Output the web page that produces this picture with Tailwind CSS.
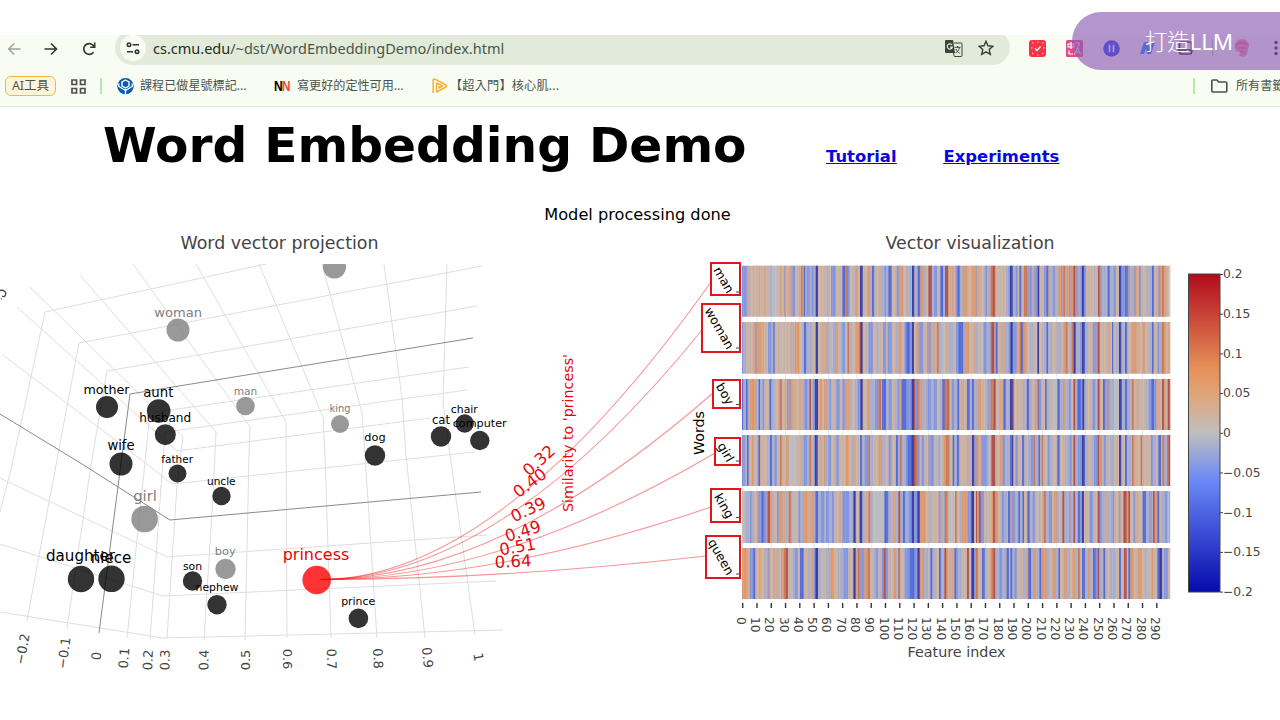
<!DOCTYPE html>
<html lang="zh-Hant">
<head>
<meta charset="utf-8">
<title>Word Embedding Demo</title>
<script src="https://cdn.jsdelivr.net/npm/@tailwindcss/browser@4"></script>
</head>
<body class="relative h-[720px] w-[1280px] overflow-hidden bg-white pt-[35px] font-['DejaVu_Sans',sans-serif] text-black">
<header class="h-[72px] overflow-hidden border-b border-[#e3eada] bg-[#f8fcf2] font-['Noto_Sans','Noto_Sans_CJK_TC',sans-serif]">
  <div class="flex h-[30px] items-start">
    <div class="flex h-[27px] w-[115px] shrink-0 items-center gap-[21px] pl-[7px]">
      <svg class="size-4" viewBox="0 0 16 16" fill="none" stroke="#9ca39a" stroke-width="1.5"><path d="M13.5 8H2M7.2 2.5 1.7 8l5.5 5.5"/></svg>
      <svg class="size-4" viewBox="0 0 16 16" fill="none" stroke="#2f372e" stroke-width="1.6"><path d="M.5 8h11.8M7 2.5 12.5 8 7 13.5"/></svg>
      <svg class="size-4" viewBox="0 0 16 16" fill="none" stroke="#2f372e" stroke-width="1.6"><path d="M12.5 11.2A5.4 5.4 0 1 1 12 4.2L13.6 6M13.7 1.6v4.6H9.2"/></svg>
    </div>
    <div class="mt-[-5px] flex h-[35px] w-[895px] shrink-0 items-start rounded-full bg-[#e2ebda] pl-[5px] pt-[5px]">
      <div class="flex h-[26px] w-[26px] items-center justify-center rounded-full bg-[#f8fcf2]">
        <svg class="size-[14px]" viewBox="0 0 14 14" fill="none" stroke="#2f372e" stroke-width="1.6"><circle cx="3" cy="3.7" r="1.7"/><path d="M6.5 3.7H13M1 10.7h6"/><circle cx="11" cy="10.7" r="1.7"/></svg>
      </div>
      <div class="ml-[7px] w-[759px] whitespace-nowrap text-[14.5px] leading-[26px] text-[#4c5549]"><span class="text-[#232b22]">cs.cmu.edu</span>/~dst/WordEmbeddingDemo/index.html</div>
      <svg class="ml-[33px] mt-[5px] h-[18px] w-[18px]" viewBox="0 0 18 18"><path d="M1 0h7l2 13H1a1 1 0 0 1-1-1V1a1 1 0 0 1 1-1z" fill="#3c433b"/><path d="M8.7 3H16a1 1 0 0 1 1 1v11.500a1 1 0 0 1-1 1H9.500L8.300 13" fill="none" stroke="#3c433b"/><path d="M7 5A2.600 2.600 0 1 0 7.300 7.200H5" fill="none" stroke="#e2ebda" stroke-width="1.200"/><path d="M9.600 7.300H15.500M12.500 6v1.300M14.500 7.500c-.5 2.500-2 4.500-4 5.500M11 9c.8 2 2 3.300 3.700 4.300" fill="none" stroke="#3c433b"/></svg>
      <svg class="ml-[15px] mt-[5px] size-4" viewBox="0 0 16 16" fill="none" stroke="#333b32" stroke-width="1.400"><path d="m8 1.300 2 4.500 4.900.5-3.700 3.300 1.100 4.800L8 11.900l-4.300 2.500 1.100-4.800L1.100 6.300 6 5.800z"/></svg>
    </div>
    <div class="flex w-[270px] shrink-0 items-center pl-[19px] pt-[3px]">
      <svg class="size-[17px]" viewBox="0 0 17 17"><rect width="17" height="17" rx="3" fill="#f4344d"/><path d="M3 3h1.500M8 2h1.500M13 3h1.500M2 8h1.500M14 8h1.500M3 13.500h1.500M8 15h1.500M13 13.500h1.500" stroke="#ffb04d" stroke-width="1.500"/><path d="m6 8.500 2 2 3.500-4" fill="none" stroke="#fff" stroke-width="1.300"/></svg>
      <svg class="ml-[20px] h-[17px] w-[17px]" viewBox="0 0 17 17"><rect width="17" height="17" rx="1.500" fill="#e54b86"/><path d="M2 4h6v3H2zM5 2v7M3 10.500v3.500h4M9.500 3h3.500v3" fill="none" stroke="#fff" stroke-width="1.200"/><path d="m8.500 14.500 3-7 3 7M9.800 12h3.500" fill="none" stroke="#e8cce8" stroke-width="1.300"/></svg>
      <svg class="ml-[20px] size-[17px]" viewBox="0 0 17 17"><circle cx="8.500" cy="8.500" r="8.300" fill="#0a35ff"/><path d="M6.500 4.800v7.400M10.500 4.800v7.400" stroke="#fff" stroke-width="1.700"/></svg>
      <svg class="ml-[20px] h-[17px] w-[17px]" viewBox="0 0 17 17"><path d="M4 2h4l1 5 2-5h4l-4 12H7L6 9l-2 5H0z" fill="#0082ff"/></svg>
      <svg class="ml-[20px] h-[17px] w-[17px]" viewBox="0 0 17 17" fill="none" stroke="#111b18" stroke-width="1.700"><rect x="2.500" y="2" width="12" height="12" rx="1.500"/><path d="M.5 10h16"/></svg>
      <div class="ml-[18px] h-4 w-px bg-[#8ac987]"></div>
      <svg class="ml-[19px] size-[20px]" viewBox="0 0 20 20"><path d="M3 10C1 4 7 1 10 1c5 0 9 5 6 10l-1 5-3 3-5-1 1-4-4-1z" fill="#f88a9f"/><path d="M4 7c3-3 8-3 11 0M5 10h9M8 13l5 2M7 4l6 1" stroke="#e05c8c" stroke-width="1.300" fill="none"/></svg>
      <svg class="ml-[22px] h-4 w-1" viewBox="0 0 4 16" fill="#111b14"><circle cx="2" cy="2.500" r="1.700"/><circle cx="2" cy="8" r="1.700"/><circle cx="2" cy="13.500" r="1.700"/></svg>
    </div>
  </div>
  <div class="flex h-[42px] items-center whitespace-nowrap pl-[5px] text-[12.1px] text-[#4b5449] *:shrink-0">
    <div class="flex h-[20px] w-[51px] items-center justify-center rounded-[6px] border-[1.500px] border-[#f3b64e] bg-[#fff5dd] text-[12.500px]">AI工具</div>
    <svg class="ml-[15px] size-[15px]" viewBox="0 0 15 15" fill="none" stroke="#4b5349" stroke-width="1.700"><path d="M1 1h4.500v4.500H1zM9.500 1H14v4.500H9.500zM1 9.500h4.500V14H1zM9.500 9.500H14V14H9.500z"/></svg>
    <div class="ml-[14px] h-4 w-[2px] bg-[#b4e8ad]"></div>
    <svg class="ml-[15px] h-[17px] w-[17px]" viewBox="0 0 17 17"><circle cx="8.500" cy="8.300" r="8.200" fill="#0b5cad"/><path d="M8.500 17v-6M1.800 5.500v3l6.700 4 6.700-4v-3" fill="none" stroke="#fff" stroke-width="1.300"/><path d="m8.500 2 3.500 2v4l-3.500 2L5 8V4z" fill="#0b5cad" stroke="#fff" stroke-width="1.400"/></svg>
    <span class="ml-[6px] w-[107px]">課程已做星號標記...</span>
    <span class="ml-[27px] w-[16px] origin-left scale-x-[0.86] font-['Liberation_Sans',sans-serif] text-[14px] font-bold tracking-[-1px] text-black">N<span class="text-[#ef4b35]">N</span></span>
    <span class="ml-[7px] w-[108px]">寫更好的定性可用...</span>
    <svg class="ml-[27px] h-[16px] w-[16px]" viewBox="0 0 16 16" fill="none" stroke="#f5b02e" stroke-width="1.500" stroke-linejoin="round"><path d="M1.200 15V2Q1.500.8 3 1.200L14 7q1 1 0 2L4.500 14V5l6 3-3.500 2V8"/></svg>
    <span class="ml-[2px] w-[117px] tracking-[0.25px]">【超入門】核心肌...</span>
    <div class="ml-[626px] h-4 w-[2px] bg-[#b4e8ad]"></div>
    <svg class="ml-[16px] h-[14px] w-[17px] shrink-0" viewBox="0 0 17 14" fill="none" stroke="#4b5349" stroke-width="1.600"><path d="M1.800 1h4l2 2h7q1 0 1 1v8q0 1-1 1H1.800q-1 0-1-1V2q0-1 1-1z"/></svg>
    <span class="ml-[8px]">所有書籤</span>
  </div>
</header>
<main>
  <div class="flex h-[92px] items-start pl-[103px]">
    <h1 class="w-[723px] whitespace-nowrap pt-[8px] text-[48.700px] font-bold leading-[60px]">Word Embedding Demo</h1>
    <nav class="flex gap-[47px] pt-[38px] text-[16.400px] font-bold leading-6 text-[#0808e0] underline"><a>Tutorial</a><a>Experiments</a></nav>
  </div>
  <p class="h-[31px] pr-[5px] text-center text-[16.200px] leading-[31px]">Model processing done</p>
  <svg width="1280" height="490" viewBox="0 230 1280 490" font-family="DejaVu Sans, sans-serif">
    <defs>
      <clipPath id="scene"><path d="M0 264h520v400H0z"/></clipPath>
      <linearGradient id="bar" x1="0" y1="1" x2="0" y2="0"><stop offset="0" stop-color="#050aac"/><stop offset=".35" stop-color="#6a89f7"/><stop offset=".5" stop-color="#bebebe"/><stop offset=".6" stop-color="#dcaa84"/><stop offset=".7" stop-color="#e6915a"/><stop offset="1" stop-color="#b20a1c"/></linearGradient>
    </defs>
    <g fill="#444" font-size="17.400" text-anchor="middle"><text x="279.500" y="249" textLength="198" lengthAdjust="spacingAndGlyphs">Word vector projection</text><text x="970" y="249" textLength="169" lengthAdjust="spacingAndGlyphs">Vector visualization</text></g>
    <g clip-path="url(#scene)" fill="none">
      <path stroke="#dedede" d="M266 264 45 312 12 465 0 512M482 266 79 343 49 502 27 621M477 306 107 371 91 465 67 628M469 367 150 413 127 638M467 390 165 432 150 640M430 418 177 451M475 452 172 484 147 464 3 355M487 535 167 557 0 478M496 581 163 596 0 544M503 630 163 638 0 612M17 307 177 451M30 287 183 437 177 485 167 638M80 275 216 432 213 495 204 640M133 264 250 427 249 455 245 640M196 264 286 422 287 638M259 264 323 417 325 455 331 638M322 264 362 413 365 455 377 638M384 264 402 398 406 455 425 638M447 264 443 402 450 455 475 635"/>
      <path stroke="#8a8a8a" d="M473 338 130 394 99 633M0 414 82 464 170 520 481 492"/>
    </g>
    <g id="dots" clip-path="url(#scene)"></g>
    <g id="words" text-anchor="middle"></g>
    <g id="ticks3d" fill="#444" text-anchor="middle" font-size="13"></g>
    <path d="M0 290.500c4-1 6.500 1.500 5.500 4.500q-1 2.500-3.500 1M1 298.500l.8.500" fill="none" stroke="#444" stroke-width="1.300"/>
    <g fill="none" stroke="#f00000" stroke-opacity=".42" stroke-width="1.100"><path d="M320 579.500Q500 579.500 711 282"/><path d="M320 579.500Q500 579.500 702 330"/><path d="M320 579.500Q500 579.500 713 393"/><path d="M320 579.500Q500 579.500 715 453"/><path d="M320 579.500Q500 579.500 711 507"/><path d="M320 579.500Q500 579.500 706 556"/></g>
    <g fill="#e30a13" font-size="16.500"><text transform="translate(529 477) rotate(-42)">0.32</text><text transform="translate(518.500 498.500) rotate(-37)">0.40</text><text transform="translate(514 522.500) rotate(-25)">0.39</text><text transform="translate(507 542) rotate(-17)">0.49</text><text transform="translate(500.500 555.500) rotate(-10)">0.51</text><text transform="translate(495 568) rotate(-3)">0.64</text><text transform="translate(572.500 512) rotate(-90)" font-size="14.300" textLength="158" lengthAdjust="spacingAndGlyphs">Similarity to 'princess'</text></g>
    <text transform="translate(703.500 455) rotate(-90)" font-size="14.400" textLength="44" lengthAdjust="spacingAndGlyphs">Words</text>
    <g id="heat"></g>
    <g fill="none" stroke="#e3141c" stroke-width="2"><path d="M711 263h29v32h-29zM702 304h38v48h-38zM713 380h27v28h-27zM715 438h25v27h-25zM711 489h29v33h-29zM706 536h34v42h-34z"/></g>
    <g font-size="12.500" text-anchor="end"><text transform="translate(727 294) rotate(60)">man</text><text transform="translate(727 350) rotate(60)">woman</text><text transform="translate(727 406) rotate(60)">boy</text><text transform="translate(727 463) rotate(60)">girl</text><text transform="translate(727 519.500) rotate(60)">king</text><text transform="translate(727 576) rotate(60)">queen</text></g>
    <path d="M736 292h3M736 348h3M736 404.500h3M736 461h3M736 517.500h3M736 574h3" stroke="#444"/>
    <g id="axis" fill="#444" font-size="12.200"></g>
    <text x="956.500" y="656.500" fill="#444" font-size="14.400" text-anchor="middle" textLength="98" lengthAdjust="spacingAndGlyphs">Feature index</text>
    <rect x="1188.500" y="274" width="31.500" height="318" fill="url(#bar)" stroke="#444"/>
    <g id="scale" fill="#444" font-size="12.300"></g>
  </svg>
</main>
<div class="absolute left-[1072px] top-[12px] h-[58px] w-[260px] rounded-full bg-[#8d5cb4]/65 pl-[73px] font-['Noto_Sans','Noto_Sans_CJK_TC',sans-serif] text-[22.500px] font-light leading-[60px] text-white"><span class="inline-block whitespace-nowrap tracking-[-0.2px]">打造<span class="font-normal">LLM</span></span></div>
<script>
const NS = 'http://www.w3.org/2000/svg';
const add = (id, tag, at, text) => {
  const e = document.createElementNS(NS, tag);
  for (const k in at) e.setAttribute(k, at[k]);
  if (text !== undefined) e.textContent = text;
  document.getElementById(id).appendChild(e);
};
// name, circle x, y, radius, label centre x, baseline, font size, tone
const pts = [['',334.5,267,11.5,0,0,0,'g'],['woman',178,330,11.5,178.2,316.5,13.1,'g'],['man',245.500,406,9.3,245.500,395.3,10.6,'g'],['king',340,424,9,340,411.7,9.9,'g'],['girl',144.600,519,13.3,145,500.7,14.8,'g'],['boy',225.500,569,10.2,225.200,554.7,11.3,'g'],['mother',107,407,11,106.500,393.7,12.7],['aunt',158.700,411,11.8,158.300,397.3,13.3],['husband',165.300,434.700,10.500,165.200,422,12.1],['wife',121,464,11.500,121,450.3,13.2],['father',177.500,473.500,9,177.200,463,10.5],['uncle',221.500,496,9.2,221.300,485,10.5],['dog',375,455.500,10.2,375,441,11.3],['cat',441,436.500,10.2,441,424,11.7],['chair',464.700,423.500,9.2,464.300,412.700,10.9],['computer',479.800,440.500,9.7,479.700,426.500,11.2],['daughter',81,579,13.2,80.500,561,15.1],['niece',111.500,578.800,13.2,111,562.700,15.1],['son',192.500,581,9.7,192.500,570,10.9],['nephew',217,604.700,9.7,217,591.300,10.9],['prince',358.400,618.400,9.8,358.200,604.500,10.9],['princess',316.700,580,14.3,316,560,16,'r']];
for (const [n,x,y,r,tx,ty,s,c] of pts) {
  const dot = {g:'#808080',r:'#ff0000'}[c] || '#000';
  add('dots','circle',{cx:x,cy:y,r,fill:dot,'fill-opacity':.8});
  if (n) add('words','text',{x:tx,y:ty,'font-size':s,fill:{g:'#808080',r:'#e80000'}[c]||'#000'},n);
}
for (const [t,x,y,a] of [['−0.2',22.5,649,-80],['−0.1',64,653,-83],['0',96.5,656,-85],['0.1',124,658,-86],['0.2',148,660,-87],['0.3',165,660,-88],['0.4',204,660,-89],['0.5',245,660,-90],['0.6',287,659,90],['0.7',331.5,659,88],['0.8',378,658.5,87],['0.9',427.500,657.5,85],['1',478.500,657,80]])
  add('ticks3d','text',{transform:`translate(${x} ${y}) rotate(${a})`,y:4.5},t);
for (let i = 0; i < 30; i++) {
  const x = 742.7 + i*14.28;
  add('heat','path',{d:`M${x} 265V600`,stroke:'#e6e8f0'});
  add('axis','path',{d:`M${x} 603v5`,stroke:'#333','stroke-width':1.4});
  add('axis','text',{transform:`translate(${x-6} 617) rotate(90)`},String(i*10));
}
['0.2','0.15','0.1','0.05','0','−0.05','−0.1','−0.15','−0.2'].forEach((t,i)=>{
  add('scale','path',{d:`M1220 ${274.500+i*39.7}h3`,stroke:'#444'});
  add('scale','text',{x:1223,y:278.300+i*39.7},t);
});
// Heat rows: stripe start (thirds of a pixel, from 735 / from 950) and colour key.
const tone = {n:'#cab3a6',g:'#bdbcbd',o:'#d5a68a',O:'#db9a72',r:'#c9795b',R:'#b2544f',l:'#a9aecb',b:'#8496de',B:'#566cd6',D:'#3b3fa4',p:'#aa97b0'};
const rows = [
 [265.7,51,'21b 36l 40o 44n 70o 76n 86o 94n 104l 112g 130n 134o 142n 147p 152n 160o 168O 172b 180n 192o 198r 203n 206B 211l 216b 224l 230b 236l 242D 249n 272n 276l 282n 288b 302n 322B 331r 339b 344g 350n 358l 363O 368n 375D 383n 398O 405l 411B 418n 432o 437l 448b 454l 460B 470n 485b 492O 504n 516l 531D 538l 548B 556O 566l 572n 580R 591l 597b 606n 616B 624l 630R 640n',
  '0o 18b 22B 29l 38O 50o 58n 65O 76p 82o 93n 100l 106b 112o 116l 122r 128R 136n 168l 175b 180D 188l 197b 203n 208B 214n 222r 232p 238b 245l 252p 257b 263D 268n 282b 289B 295O 299l 308b 315l 325O 333p 340r 345l 350O 357p 365O 370R 376p 386l 391b 396D 402b 408n 430l 436n 444R 449p 456l 473B 479l 490b 497n 507D 514b 525B 533p 541l 550p 558o 567b 574n 590l 606B 612n 618o 625b 630O 636r 643o 650n'],
 [322,51.7,'21b 25l 32n 52o 60p 65O 78o 88n 99b 109l 115B 119n 138n 168l 174o 180O 192n 202l 207B 214l 232n 242D 249n 260o 275l 284n 292l 300O 308n 316l 323b 330n 337r 342l 350n 362O 374R 377D 383n 400b 406b 415n 425l 433n 444b 453n 458b 470n 482l 490O 500n 508b 514B 526b 531D 537n 545O 550p 557b 565n 576p 588l 597o 606r 611l 622g 632o 640l',
  '0l 10n 18b 25B 40l 44O 57n 70o 78l 85n 93g 100b 110l 118p 124R 133p 138B 143n 152o 164l 176b 181D 188b 200o 208r 213B 220O 230n 240l 250n 262D 267n 280l 289B 294l 305n 320l 334n 340O 348r 353n 360l 365r 371D 377l 390b 396D 404l 414n 428b 434p 443R 449n 472o 480n 486B 490n 498l 507D 514l 525B 532n 545O 558o 566n 578O 585n 596l 606B 611n 622b 628l 636r 642O 648n 653o'],
 [379,51,'21B 25l 33B 38l 45O 63l 71B 75l 82b 88n 103B 109l 120n 130O 135r 141n 150o 156p 170o 182n 190o 203l 208b 218l 223R 228n 233b 240D 249n 254O 261n 267O 275l 283b 289n 300l 304b 314n 322b 329l 333O 343l 350n 360l 368b 376D 383n 398O 405l 420b 430r 438o 441B 453l 462b 470n 480l 487b 492O 500B 514b 530D 537R 541b 546r 553p 556O 562l 578b 588l 596b 606n 613l 622B 629r 637R 641O',
  '0n 5b 12l 22B 28n 33o 43n 51B 59l 66B 72l 84O 94n 105l 113p 123r 130R 137n 149o 160B 167l 180D 188R 191n 218l 225n 230B 238l 246n 253O 257l 263R 266b 274n 285B 290l 296n 308g 322B 329l 339O 345l 357b 363n 370R 376l 382B 393b 397D 403l 410n 427b 435l 443R 449n 459B 465p 480l 492g 507D 515l 525B 532l 546r 551n 560o 567n 588l 597b 604B 613b 619o 630n 636R 642O 648n 653R'],
 [435,51,'21b 30l 36B 41n 50O 56n 65l 70B 75o 82n 96l 105B 111l 118b 125n 135r 140n 153O 161g 180n 194o 201l 206b 217l 223r 229n 236b 240D 248n 253o 260n 266O 273l 280b 288n 300l 304b 311n 331O 342n 350l 357o 364n 375B 381l 390b 400r 405l 415n 431O 441l 450n 461b 470n 483B 490l 495r 501l 513b 518B 530D 537R 542r 548b 554n 560b 568n 579p 586b 598n 607l 619n 625O 633r 641O',
  '0n 8B 13l 21B 28n 50o 56l 66D 73p 84o 94b 110l 118n 124R 131R 136n 150O 158b 165l 180B 186D 190n 197b 203n 216B 223n 232l 242b 250r 256l 265B 270l 275r 280n 293b 299l 308n 322B 329n 345l 358b 365n 370R 376l 384b 396D 404l 414n 426l 432b 443R 448O 457l 462b 469n 480l 492n 507D 514n 525B 531l 546r 551o 560n 572r 577n 603b 610l 619n 625B 633n 637r 643l 652R'],
 [491,52,'21g 32l 45b 50l 57n 67p 72b 80B 86b 94p 98R 105O 112l 118n 126b 133O 145o 153l 161r 168l 175n 190b 196l 204O 220o 230O 237l 241B 250l 258b 267l 273b 281l 291b 298n 310o 322b 342l 355D 362n 374D 382l 391o 400r 406l 414g 435g 448B 460l 472o 480l 490R 496l 504B 511l 520b 530D 537b 547D 554O 574n 582l 590n 610p 617l 629r 638n',
  '0g 15r 20n 28l 36O 54b 64D 72n 78R 82n 86R 92b 102n 125O 129R 136O 145n 155b 163l 174B 180p 188b 195l 205B 210l 217B 222n 232B 239l 248b 256n 265l 270n 278O 282r 288l 297b 306n 312O 320l 328n 337R 343l 357p 363l 370R 375l 384B 390b 396D 402n 418b 430n 443R 449b 457l 467o 473l 488b 493n 507p 512n 520R 530O 535R 540n 550b 555o 563n 578B 588l 597p 605l 609R 614O 622B 628n 635l 645b 652l'],
 [548,51,'21O 35o 45b 55B 61n 70o 78n 89l 97p 104n 116o 126l 132n 138O 147r 153R 159n 172l 180b 188n 195B 206n 218l 226o 235b 241D 249l 258n 272l 286O 298n 308l 325b 340n 355D 362o 368r 374p 380b 388O 398r 405n 415l 423b 430n 440b 446R 452b 460n 475O 482l 487n 490R 494n 505l 510b 524B 538b 547D 554O 567l 580n 586B 592l 603n 612B 618l 628R 634O 640n',
  '0o 13B 18b 24l 35n 51R 57n 64D 72b 78r 84n 96B 104l 110n 118o 124r 130R 136l 148b 156l 170B 177n 181B 187l 193b 200n 218l 229O 235B 244l 251O 259l 268B 274O 290l 297n 308O 318l 325B 330n 342O 350l 360n 368O 377l 384r 390n 396B 405l 412O 420l 429B 437b 443R 448l 460B 466n 478l 495n 507B 513n 522R 530n 535B 541O 553n 563O 575n 585l 592n 604O 610n 622B 628D 637n 642b 653n']];
const rgb = h => [1,3,5].map(i => parseInt(h.slice(i,i+2),16));
rows.forEach(([y,h,a,b],ri) => {
  const read = (s,o) => s.split(' ').map(t => [o+parseInt(t)/3, t.slice(-1)]);
  const seg = [...read(a,735).filter(s => s[0] < 950), ...read(b,950)];
  seg.forEach(([x,c],i) => {
    const end = i+1 < seg.length ? seg[i+1][0] : 1170.3;
    for (let q = x, k = 0; q < end-.2; q += 1.43, k++) {
      const j = Math.sin((q*7.3+ri*31)*12.9)*(k ? 11 : 4);
      const [r,g,bl] = rgb(tone[c]);
      add('heat','rect',{x:q,y,width:Math.min(1.43,end-q)+(end<1170 ? .4 : 0),height:h,fill:`rgb(${r+j|0},${g+j*.2|0},${bl-j|0})`});
    }
  });
});
</script>
</body>
</html>
